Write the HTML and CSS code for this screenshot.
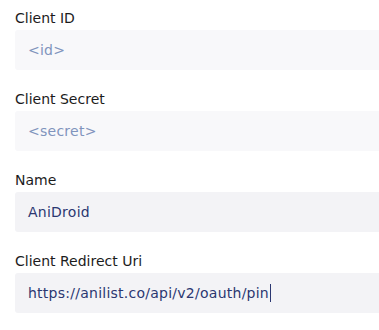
FILE: index.html
```html
<!DOCTYPE html>
<html lang="en">
<head>
    <meta charset="UTF-8">
    <title>Client</title>
    <link rel="stylesheet" href="styles.css">
</head>
<body>
    <div class="form">
        <div class="field">
            <label class="label">Client ID</label>
            <div class="input placeholder">&lt;id&gt;</div>
        </div>
        <div class="field">
            <label class="label">Client Secret</label>
            <div class="input placeholder">&lt;secret&gt;</div>
        </div>
        <div class="field">
            <label class="label">Name</label>
            <div class="input filled">AniDroid</div>
        </div>
        <div class="field">
            <label class="label">Client Redirect Uri</label>
            <div class="input filled">https://anilist.co/api/v2/oauth/pin<span class="caret"></span></div>
        </div>
    </div>
</body>
</html>
```

FILE: styles.css
```css
body {
    margin: 0;
    background-color: #ffffff;
    font-family: 'DejaVu Sans', sans-serif;
}
.form {
    padding: 9px 0 0 15px;
    display: flex;
    flex-direction: column;
    gap: 20px;
}
.field {
    display: flex;
    flex-direction: column;
    gap: 3px;
}
.label {
    font-size: 14px;
    line-height: 18px;
    color: #1c1c1c;
}
.input {
    height: 40px;
    display: flex;
    align-items: center;
    padding-left: 13px;
    font-size: 14px;
    letter-spacing: 0.25px;
    border-radius: 3px 0 0 3px;
}
.placeholder {
    background-color: #f8f8fa;
    color: #8094bd;
}
.filled {
    background-color: #f3f3f6;
    color: #2b3771;
}
.caret {
    display: inline-block;
    width: 1px;
    height: 18px;
    margin-left: 1px;
    background-color: #2b3771;
}
```
